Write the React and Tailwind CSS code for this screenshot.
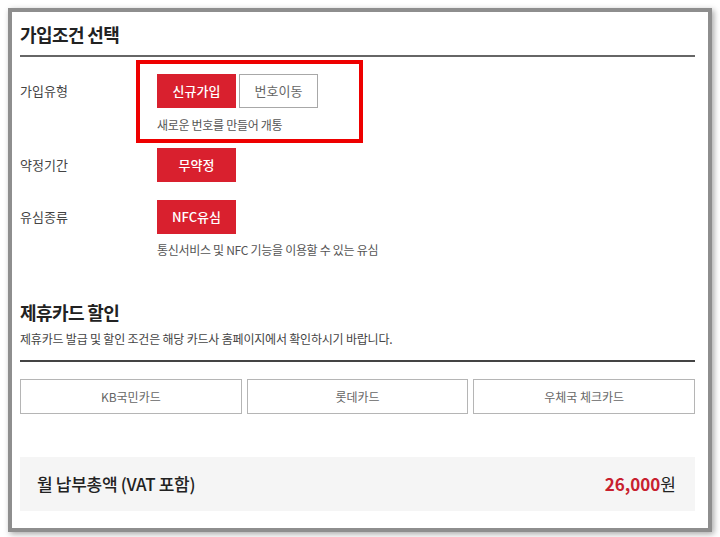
export default function App() {
  const font = { fontFamily: '"Noto Sans CJK KR", "Noto Sans", sans-serif' };

  return (
    <div className="w-[720px] h-[537px] bg-white pl-2 pt-2" style={font}>
      <div className="relative w-[704px] h-[524px] border-4 border-[#8e8e8e] bg-white shadow-[2px_2px_6px_rgba(0,0,0,0.35)] pl-2 pr-[13px] flex flex-col">
        {/* annotation box */}
        <div className="absolute left-[124px] top-[48px] w-[227px] h-[83px] border-4 border-[#ee0000]" />

        <h1 className="mt-[10px] text-[18px] leading-6 font-bold text-[#222] tracking-[-0.6px]">가입조건 선택</h1>
        <div className="mt-[9px] h-[2px] bg-[#666]" />

        <div className="mt-[17px] flex">
          <div className="w-[137px] h-[34px] flex items-center text-[13px] text-[#444]">가입유형</div>
          <div className="flex flex-col">
            <div className="flex gap-[3px]">
              <button className="w-[79px] h-[34px] bg-[#d9202e] text-white text-[13px] font-medium">신규가입</button>
              <button className="w-[79px] h-[34px] border border-[#a8a8a8] text-[#666] text-[13px]">번호이동</button>
            </div>
            <p className="mt-[8px] text-[12px] leading-[18px] text-[#555] tracking-[-0.3px]">새로운 번호를 만들어 개통</p>
          </div>
        </div>

        <div className="mt-[14px] flex">
          <div className="w-[137px] h-[34px] flex items-center text-[13px] text-[#444]">약정기간</div>
          <button className="w-[79px] h-[34px] bg-[#d9202e] text-white text-[13px] font-medium">무약정</button>
        </div>

        <div className="mt-[18px] flex">
          <div className="w-[137px] h-[34px] flex items-center text-[13px] text-[#444]">유심종류</div>
          <div className="flex flex-col">
            <button className="w-[79px] h-[34px] bg-[#d9202e] text-white text-[13px] font-medium">NFC유심</button>
            <p className="mt-[7px] text-[12px] leading-[18px] text-[#555] tracking-[-0.3px]">통신서비스 및 NFC 기능을 이용할 수 있는 유심</p>
          </div>
        </div>

        <h2 className="mt-[41px] text-[18px] leading-6 font-bold text-[#222] tracking-[-0.6px]">제휴카드 할인</h2>
        <p className="mt-[6px] text-[12px] leading-[18px] text-[#444] tracking-[-0.2px]">제휴카드 발급 및 할인 조건은 해당 카드사 홈페이지에서 확인하시기 바랍니다.</p>
        <div className="mt-[12px] h-[2px] bg-[#444]" />

        <div className="mt-[17px] grid grid-cols-3 gap-[5px]">
          <button className="h-[35px] border border-[#b5b5b5] text-[12px] text-[#666]">KB국민카드</button>
          <button className="h-[35px] border border-[#b5b5b5] text-[12px] text-[#666]">롯데카드</button>
          <button className="h-[35px] border border-[#b5b5b5] text-[12px] text-[#666]">우체국 체크카드</button>
        </div>

        <div className="mt-[43px] h-[54px] bg-[#f5f5f5] flex items-center justify-between pl-[17px] pr-[19px]">
          <span className="text-[17px] font-medium text-[#222] tracking-[-0.3px]">월 납부총액 (VAT 포함)</span>
          <span className="text-[17px] text-[#222]">
            <span className="font-bold text-[#c8202e]">26,000</span>원
          </span>
        </div>
      </div>
    </div>
  );
}
